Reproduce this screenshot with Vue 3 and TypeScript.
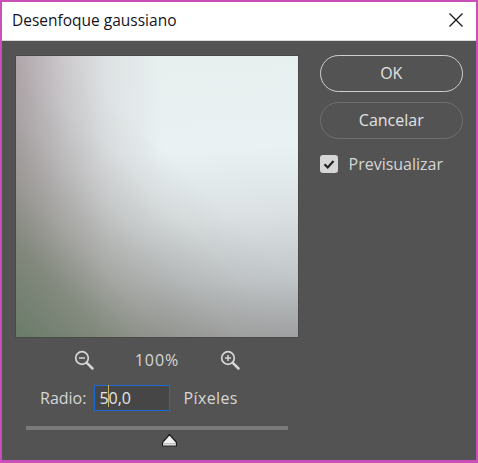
<script setup lang="ts">
const radius = '50,0'
</script>

<template>
  <div class="frame">
    <header class="titlebar">
      <span class="title">Desenfoque gaussiano</span>
      <svg class="close" width="16" height="16" viewBox="0 0 16 16" aria-label="Cerrar">
        <path d="M1.5 1.5 L14.5 14.5 M14.5 1.5 L1.5 14.5" stroke="#1a1a1a" stroke-width="1.3" fill="none" />
      </svg>
    </header>
    <main class="body">
      <section class="left">
        <div class="preview"></div>
        <div class="zoom">
          <svg width="22" height="22" viewBox="0 0 22 22" fill="none" stroke="#d6d6d6">
            <circle cx="9" cy="9" r="6.3" stroke-width="1.7" />
            <path d="M6 9 H12" stroke-width="1.5" />
            <path d="M13.8 13.8 L19.5 19.5" stroke-width="2.5" stroke-linecap="round" />
          </svg>
          <span class="pct">100%</span>
          <svg width="22" height="22" viewBox="0 0 22 22" fill="none" stroke="#d6d6d6">
            <circle cx="9" cy="9" r="6.3" stroke-width="1.7" />
            <path d="M6 9 H12 M9 6 V12" stroke-width="1.5" />
            <path d="M13.8 13.8 L19.5 19.5" stroke-width="2.5" stroke-linecap="round" />
          </svg>
        </div>
        <div class="radius">
          <span class="label">Radio:</span>
          <div class="input"><span class="value">{{ radius }}</span><i class="caret"></i></div>
          <span class="label unit">Píxeles</span>
        </div>
        <div class="slider">
          <div class="track"></div>
          <svg class="thumb" width="17" height="15" viewBox="0 0 17 15">
            <path d="M8.5 1.5 L15.5 9.5 V13 H1.5 V9.5 Z" fill="#f2f2f2" stroke="#1e1e1e" stroke-width="1.2" stroke-linejoin="round" />
            <path d="M2 10.8 H15" stroke="#a8a8a8" stroke-width="1" />
          </svg>
        </div>
      </section>
      <aside class="right">
        <button class="btn primary">OK</button>
        <button class="btn">Cancelar</button>
        <label class="check">
          <span class="box">
            <svg width="18" height="18" viewBox="0 0 18 18">
              <path d="M4.5 9.3 L7.7 12.5 L13.5 6" fill="none" stroke="#222" stroke-width="2.2" />
            </svg>
          </span>
          <span class="label">Previsualizar</span>
        </label>
      </aside>
    </main>
  </div>
</template>

<style>
html, body { margin: 0; padding: 0; background: #c94fbb; }
</style>

<style scoped>
.frame {
  width: 478px;
  height: 463px;
  box-sizing: border-box;
  border: solid #c94fbb;
  border-width: 2px 2px 3px 2px;
  display: flex;
  flex-direction: column;
  font-family: "Open Sans", "Noto Sans", sans-serif;
  background: #535353;
}
.titlebar {
  height: 39px;
  flex: none;
  box-sizing: border-box;
  background: #fff;
  border-bottom: 1px solid #d8d8d8;
  display: flex;
  align-items: center;
  justify-content: space-between;
  padding: 0 12px 3px 10px;
}
.title { font-size: 15.5px; color: #14141e; }
.body {
  flex: 1;
  display: flex;
  padding: 15px 13px 0 14px;
  gap: 21.5px;
}
.left { width: 282px; flex: none; display: flex; flex-direction: column; }
.preview {
  height: 281px;
  background:
    linear-gradient(45deg, rgba(106, 124, 106, 1) 0%, rgba(122, 130, 116, 0.88) 16%, rgba(140, 142, 134, 0.6) 28%, rgba(155, 155, 152, 0.32) 40%, rgba(165, 165, 165, 0.12) 50%, rgba(170, 170, 170, 0) 60%),
    linear-gradient(90deg, rgba(176, 165, 170, 1) 0%, rgba(198, 193, 197, 0.85) 16%, rgba(214, 214, 217, 0.55) 32%, rgba(225, 230, 230, 0) 52%),
    linear-gradient(177deg, #e7efef 0%, #e9f1f2 35%, #dbe1e2 58%, #c1c6c8 80%, #9e9fa0 100%);
  box-shadow: 0 0 0 1px #4a4a4a;
}
.zoom {
  display: flex;
  align-items: center;
  justify-content: center;
  gap: 40px;
  margin-top: 12px;
  height: 22px;
}
.pct { font-size: 16px; letter-spacing: 1px; color: #d6d6d6; }
.radius {
  display: flex;
  align-items: center;
  margin-top: 14px;
  padding-left: 24px;
}
.label { font-size: 16px; color: #d6d6d6; }
.input {
  position: relative;
  width: 76px;
  height: 26px;
  box-sizing: border-box;
  border: 1.5px solid #1d6ad6;
  background: #464646;
  margin-left: 8px;
  padding-left: 4px;
  display: flex;
  align-items: center;
}
.value { font-size: 16px; color: #e4e4e4; }
.caret {
  position: absolute;
  left: 13px;
  top: -1px;
  width: 1px;
  height: 22px;
  background: #c9b66a;
}
.unit { margin-left: 13px; letter-spacing: 0.4px; }
.slider { position: relative; margin-top: 15px; padding: 0 10px; height: 24px; }
.track { height: 4px; background: #7a7a7a; }
.thumb { position: absolute; left: 145px; top: 7px; }
.right { width: 143.5px; flex: none; display: flex; flex-direction: column; margin-top: -1px; }
.btn {
  height: 37px;
  box-sizing: border-box;
  border-radius: 18.5px;
  border: 1.5px solid #6f6f6f;
  background: transparent;
  color: #e2e2e2;
  font: inherit;
  font-size: 16px;
  padding: 0 0 2px;
  margin-bottom: 10px;
}
.primary { border-color: #cfcfcf; }
.check { display: flex; align-items: center; gap: 11px; margin-top: 4px; }
.box {
  width: 18px;
  height: 18px;
  border-radius: 3px;
  background: #d6d6d6;
  display: block;
}
.box svg { display: block; }
</style>
